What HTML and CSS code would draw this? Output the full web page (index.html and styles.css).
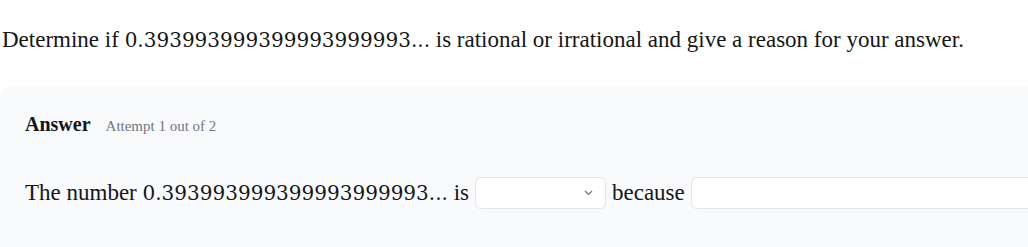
FILE: index.html
```html
<!DOCTYPE html>
<html lang="en">
<head>
  <meta charset="UTF-8" />
  <title>Rational or irrational</title>
  <link rel="stylesheet" href="styles.css">
</head>
<body>

  <p class="question">
    Determine if <span class="num">0.393993999399993999993...</span> is rational or irrational and give a reason for your answer.
  </p>

  <div class="panel">
    <div class="panel-head">
      <span class="label">Answer</span>
      <span class="attempt">Attempt 1 out of 2</span>
    </div>

    <div class="answer-row">
      <span>The number <span class="num">0.393993999399993999993...</span> is</span>
      <div class="select">
        <svg width="9" height="6" viewBox="0 0 9 6"><path d="M1 1 L4.5 4.5 L8 1" fill="none" stroke="#6b7280" stroke-width="1.2"/></svg>
      </div>
      <span>because</span>
      <div class="text-input"></div>
    </div>
  </div>

</body>
</html>
```

FILE: styles.css
```css
body {
  margin: 0;
  background-color: #fff;
  font-family: 'Liberation Serif', Georgia, serif;
  color: #161616;
  overflow: hidden;
}

.question {
  margin: 0;
  padding: 26px 0 0 2px;
  font-size: 23px;
  line-height: 28px;
  white-space: nowrap;
}

.num {
  font-family: 'DejaVu Serif', serif;
  font-size: 20px;
}

.panel {
  margin-top: 32px;
  background-color: #f8fafc;
  border-radius: 10px 0 0 10px;
  padding: 26px 0 0 25px;
  min-height: 170px;
  box-sizing: border-box;
}

.panel-head {
  display: flex;
  align-items: baseline;
  gap: 15px;
  line-height: 24px;
}

.label {
  font-weight: bold;
  font-size: 20px;
}

.attempt {
  font-size: 15px;
  color: #73777e;
}

.answer-row {
  display: flex;
  align-items: center;
  gap: 6px;
  margin-top: 39px;
  font-size: 23px;
  white-space: nowrap;
}

.select {
  width: 131px;
  height: 32px;
  box-sizing: border-box;
  background-color: #fff;
  border: 1px solid #e2e5ea;
  border-radius: 6px;
  display: flex;
  align-items: center;
  justify-content: flex-end;
  padding-right: 12px;
  flex-shrink: 0;
}

.text-input {
  width: 400px;
  height: 32px;
  box-sizing: border-box;
  background-color: #fff;
  border: 1px solid #e2e5ea;
  border-radius: 6px;
  flex-shrink: 0;
}
```
